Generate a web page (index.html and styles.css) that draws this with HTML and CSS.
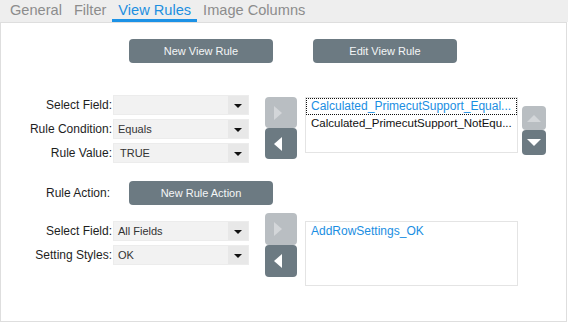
FILE: index.html
```html
<!DOCTYPE html>
<html>
<head>
<meta charset="utf-8">
<link rel="stylesheet" href="styles.css">
</head>
<body>
<div class="tabs">
  <div class="tab">General</div>
  <div class="tab">Filter</div>
  <div class="tab active">View Rules</div>
  <div class="tab">Image Columns</div>
</div>
<div class="panel">
  <div class="btnrow">
    <div class="btn wide">New View Rule</div>
    <div class="btn wide">Edit View Rule</div>
  </div>

  <div class="section s1">
    <div class="fields">
      <div class="label">Select Field:</div>
      <div class="select"><span></span><i class="caret"></i></div>
      <div class="label">Rule Condition:</div>
      <div class="select"><span>Equals</span><i class="caret"></i></div>
      <div class="label">Rule Value:</div>
      <div class="select"><span class="pl">TRUE</span><i class="caret"></i></div>
    </div>
    <div class="arrows">
      <div class="abtn light"><i class="tri right"></i></div>
      <div class="abtn dark"><i class="tri left"></i></div>
    </div>
    <div class="list l1">
      <div class="item sel focus">Calculated_PrimecutSupport_Equal...</div>
      <div class="item plain">Calculated_PrimecutSupport_NotEqu...</div>
    </div>
    <div class="updown">
      <div class="ubtn light"><i class="tri up"></i></div>
      <div class="ubtn dark"><i class="tri down"></i></div>
    </div>
  </div>

  <div class="actionrow">
    <div class="alabel">Rule Action:</div>
    <div class="btn wide">New Rule Action</div>
  </div>

  <div class="section s2">
    <div class="fields">
      <div class="label">Select Field:</div>
      <div class="select"><span>All Fields</span><i class="caret"></i></div>
      <div class="label">Setting Styles:</div>
      <div class="select"><span>OK</span><i class="caret"></i></div>
    </div>
    <div class="arrows">
      <div class="abtn light"><i class="tri right"></i></div>
      <div class="abtn dark"><i class="tri left"></i></div>
    </div>
    <div class="list l2">
      <div class="item sel">AddRowSettings_OK</div>
    </div>
  </div>
</div>
</body>
</html>
```
FILE: styles.css
```css
* { box-sizing: border-box; }
html, body { margin: 0; padding: 0; background: #fff; }
body {
  font-family: "Liberation Sans", Arial, sans-serif;
  width: 568px;
  height: 323px;
  overflow: hidden;
}
.tabs {
  height: 22px;
  background: #eeeeee;
  display: flex;
  padding-left: 4px;
}
.tab {
  padding: 0 6px;
  font-size: 14.6px;
  line-height: 21px;
  color: #8c8c8c;
  height: 22px;
}
.tab.active {
  color: #1c8fe0;
  position: relative;
}
.tab.active::after {
  content: "";
  position: absolute;
  left: 0; right: 0;
  top: 19px;
  height: 3px;
  background: #1c92e6;
}
.panel {
  width: 567px;
  height: 300px;
  border: 1px solid #dedede;
}
.btnrow {
  display: flex;
  gap: 40px;
  padding-left: 128px;
  margin-top: 16px;
}
.btn {
  background: #6c7a82;
  color: #f4f6f7;
  border-radius: 4px;
  height: 24px;
  font-size: 11px;
  line-height: 24px;
  text-align: center;
}
.btn.wide { width: 144px; }

.section {
  display: flex;
  align-items: flex-start;
}
.s1 { margin-top: 32px; }
.s2 { margin-top: 8px; }
.fields {
  display: grid;
  grid-template-columns: 112px 136px;
  row-gap: 4px;
  grid-auto-rows: 20px;
}
.s2 .fields { margin-top: 8px; }
.label {
  text-align: right;
  padding-right: 1px;
  font-size: 12px;
  line-height: 20px;
  color: #1e1e1e;
}
.select {
  background: #f2f2f2;
  border: 1px solid #ececec;
  position: relative;
  height: 20px;
  font-size: 11px;
  line-height: 18px;
  color: #333;
  padding-left: 4px;
}
.select .pl { padding-left: 2px; }
.select::after {
  content: "";
  position: absolute;
  right: 0; top: 0; bottom: 0;
  width: 20px;
  background: #e8e8e8;
}
.caret {
  position: absolute;
  right: 6px;
  top: 8px;
  width: 0; height: 0;
  border-left: 4px solid transparent;
  border-right: 4px solid transparent;
  border-top: 4px solid #111;
  z-index: 1;
}
.arrows {
  margin-left: 16px;
  margin-top: 2px;
  display: flex;
  flex-direction: column;
}
.s2 .arrows { margin-top: 0; }
.abtn {
  width: 32px;
  height: 31px;
  border-radius: 4px;
  display: flex;
  align-items: center;
  justify-content: center;
  padding-right: 6px;
}
.s2 .abtn { height: 32px; }
.light { background: #b9bec2; }
.dark { background: #6c7a82; }
.tri { display: block; width: 0; height: 0; }
.tri.right {
  border-top: 7px solid transparent;
  border-bottom: 7px solid transparent;
  border-left: 8px solid #d3d6d9;
}
.tri.left {
  border-top: 7px solid transparent;
  border-bottom: 7px solid transparent;
  border-right: 8px solid #fff;
}
.list {
  margin-left: 8px;
  width: 213px;
  border: 1px solid #e4e4e4;
}
.l1 { margin-top: 2px; height: 56px; }
.l2 { margin-top: 8px; height: 65px; }
.item {
  white-space: nowrap;
  overflow: hidden;
  font-size: 12px;
  line-height: 15px;
  padding-left: 4px;
  border: 1px solid transparent;
}
.item.sel { color: #1a8ee2; }
.item.focus { border: 1px dotted #111; }
.item.plain { font-size: 11.5px; color: #111; }
.l2 .item { margin-top: 1px; }
.updown {
  margin-left: 4px;
  margin-top: 11px;
  display: flex;
  flex-direction: column;
}
.ubtn {
  width: 24px;
  height: 24px;
  border-radius: 4px;
  display: flex;
  align-items: center;
  justify-content: center;
}
.ubtn.dark { height: 25px; }
.tri.up {
  border-left: 7px solid transparent;
  border-right: 7px solid transparent;
  border-bottom: 7px solid #d3d6d9;
}
.tri.down {
  border-left: 7px solid transparent;
  border-right: 7px solid transparent;
  border-top: 7px solid #fff;
}
.actionrow {
  display: flex;
  align-items: center;
  margin-top: 18px;
}
.alabel {
  width: 128px;
  padding-left: 45px;
  font-size: 12px;
  color: #1e1e1e;
}
```
